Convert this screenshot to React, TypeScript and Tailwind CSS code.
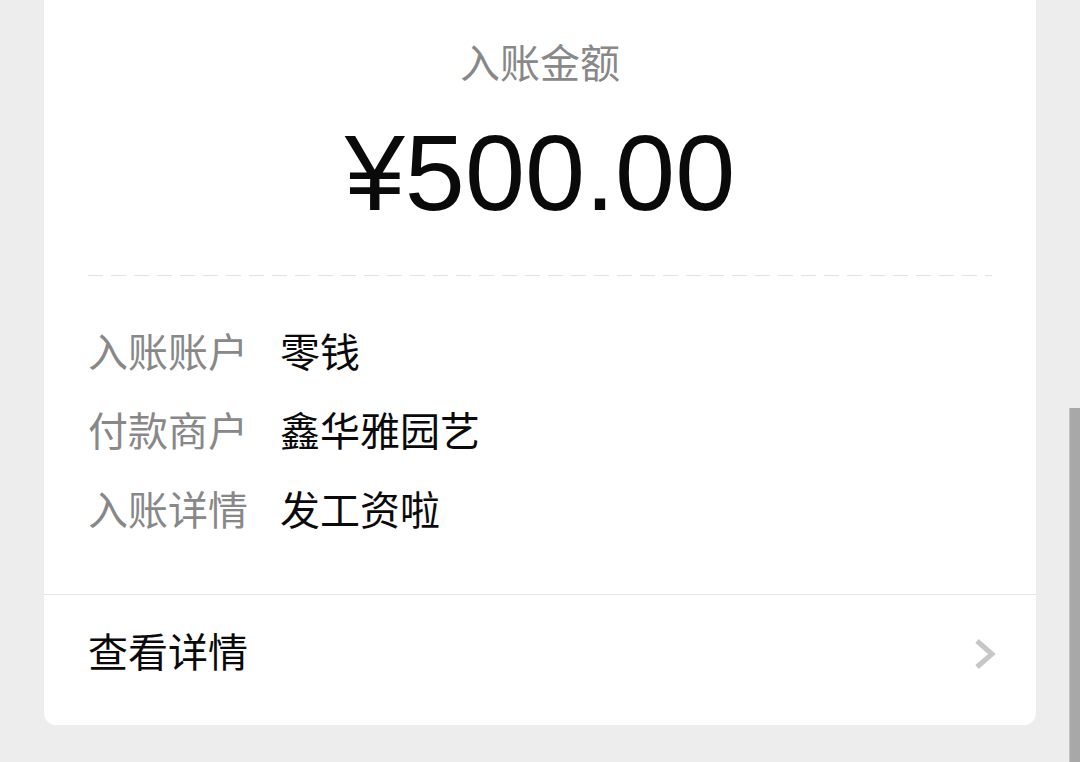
const cjk = "font-['Noto_Sans_CJK_SC','Noto_Sans',sans-serif]";

const rows = [
  { label: "入账账户", value: "零钱" },
  { label: "付款商户", value: "鑫华雅园艺" },
  { label: "入账详情", value: "发工资啦" },
];

export default function App() {
  return (
    <div className={`relative h-[762px] w-full overflow-hidden bg-[#ededed] ${cjk}`}>
      <div className="mx-[44px] -mt-[20px] rounded-[12px] bg-white">
        {/* amount */}
        <div className="flex flex-col items-center pt-[53px]">
          <div className="text-[40px] leading-[56px] text-[#888888]">入账金额</div>
          <div className="mt-[30px] font-['Liberation_Sans',Arial,sans-serif] text-[108px] leading-none text-[#0a0a0a]">
            ¥500.00
          </div>
        </div>

        {/* dashed divider */}
        <div className="mx-[44px] mt-[48px] h-px bg-[repeating-linear-gradient(90deg,#e2e2e2_0,#e2e2e2_15px,transparent_15px,transparent_23px)]" />

        {/* info rows */}
        <div className="mt-[34px] flex flex-col px-[44px]">
          {rows.map((r) => (
            <div key={r.label} className="flex h-[79px] items-center text-[40px] leading-[56px]">
              <span className="w-[192px] text-[#888888]">{r.label}</span>
              <span className="text-[#0a0a0a]">{r.value}</span>
            </div>
          ))}
        </div>

        {/* detail link */}
        <div className="mt-[47px] border-t border-[#e5e5e5]">
          <div className="flex h-[130px] items-center justify-between pb-[20px] pl-[44px] pr-[38px]">
            <span className="text-[40px] leading-[56px] text-[#0a0a0a]">查看详情</span>
            <svg width="26" height="34" viewBox="0 0 26 34" fill="none" className="mt-[8px]">
              <path d="M5 4 L20 17 L5 30" stroke="#c7c7c7" strokeWidth="5" strokeLinejoin="miter" />
            </svg>
          </div>
        </div>
      </div>

      {/* scrollbar */}
      <div className="absolute bottom-0 right-0 top-[408px] w-[11px] border-l border-[#c4c4c4] bg-[#a8a8a8]" />
    </div>
  );
}
